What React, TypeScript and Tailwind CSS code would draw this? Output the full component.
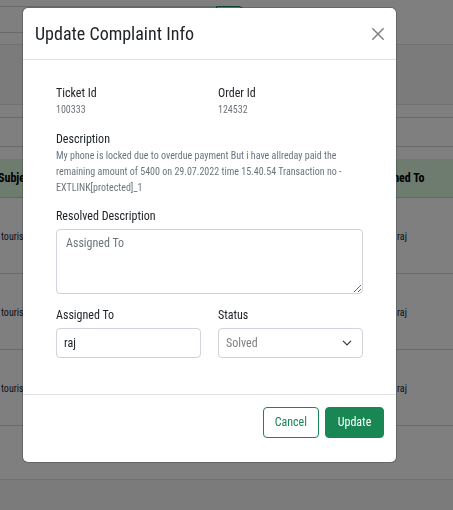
import React from "react";

const rows = [
  { id: 1, subject: "tourist", assignee: "raj" },
  { id: 2, subject: "tourist", assignee: "raj" },
  { id: 3, subject: "tourist", assignee: "raj" },
];

function ComplaintsPage() {
  return (
    <div className="min-h-screen overflow-hidden bg-[#f7f7f7]">
      <div className="h-[45px] border-b border-[#dee2e6] bg-white pt-[6px]">
        <div className="flex h-[27px] w-full">
          <div className="w-[216px] border-y border-[#ced4da]" />
          <div className="w-[27px] rounded-r border border-[#198754]" />
        </div>
      </div>
      <div className="h-[59px]" />
      <section className="border-y border-[#dee2e6] bg-white pt-3 pb-[53px]">
        <div className="h-[30px] border-y border-[#ced4da]" />
        <div className="-ml-0.5 pt-3">
          <table className="w-full table-fixed border-collapse text-left">
            <thead>
              <tr className="h-[38px] border-b border-[#c8cdca] bg-[#dcf7de] text-xs text-black">
                <th className="w-[368px] font-bold">Subject</th>
                <th className="font-bold whitespace-nowrap">Assigned To</th>
              </tr>
            </thead>
            <tbody>
              {rows.map((row) => (
                <tr key={row.id} className="h-[76px] border-b border-[#ced4da] text-[10px] text-[#212529]">
                  <td className="pt-0.5 pl-[3px]">{row.subject}</td>
                  <td className="pt-0.5 pl-[31px]">{row.assignee}</td>
                </tr>
              ))}
            </tbody>
          </table>
        </div>
      </section>
    </div>
  );
}

function Detail({ label, children }: { label: string; children: React.ReactNode }) {
  return (
    <div>
      <dt className="text-xs leading-[18px]">{label}</dt>
      <dd className="text-[10px] leading-4 text-[#6c757d]">{children}</dd>
    </div>
  );
}

export default function App() {
  return (
    <div className="font-['Roboto_Condensed','Roboto',sans-serif] text-[#212529]">
      <ComplaintsPage />
      <div className="fixed inset-0 overflow-hidden bg-black/50 pt-[7px] pr-14 pl-[22px]">
        <div role="dialog" aria-labelledby="title" className="rounded-md border border-black/20 bg-white bg-clip-padding">
          <header className="flex h-[52px] items-center justify-between border-b border-[#dee2e6] px-3">
            <h1 id="title" className="text-lg">Update Complaint Info</h1>
            <button type="button" aria-label="Close" className="text-[#808080]">
              <svg width="12" height="12" viewBox="0 0 12 12" fill="none" stroke="currentColor" strokeWidth="1.5" strokeLinecap="round">
                <path d="M.8.8 11.2 11.2M11.2.8.8 11.2" />
              </svg>
            </button>
          </header>
          <form>
            <div className="px-[33px] pt-6 pb-9">
              <dl className="grid grid-cols-2 gap-x-[17px] gap-y-3">
                <Detail label="Ticket Id">100333</Detail>
                <Detail label="Order Id">124532</Detail>
                <div className="col-span-2">
                  <Detail label="Description">
                    My phone is locked due to overdue payment But i have allreday paid the remaining amount of 5400 on
                    29.07.2022 time 15.40.54 Transaction no - EXTLINK[protected]_1
                  </Detail>
                </div>
              </dl>
              <div className="mt-[11px]">
                <label htmlFor="resolved" className="block text-xs leading-[18px]">Resolved Description</label>
                <textarea
                  id="resolved"
                  placeholder="Assigned To"
                  className="mt-1 block h-[65px] w-full rounded border border-[#ced4da] px-[9px] py-1 text-xs leading-[18px] placeholder:text-[#6c757d]"
                />
              </div>
              <div className="mt-3 grid grid-cols-2 gap-x-[17px]">
                <div>
                  <label htmlFor="assigned" className="block text-xs leading-[18px]">Assigned To</label>
                  <input
                    id="assigned"
                    defaultValue="raj"
                    className="mt-1 block h-[30px] w-full rounded border border-[#ced4da] px-[7px] text-xs"
                  />
                </div>
                <div>
                  <label htmlFor="status" className="block text-xs leading-[18px]">Status</label>
                  <div className="mt-1 grid items-center">
                    <select
                      id="status"
                      defaultValue="Solved"
                      className="col-start-1 row-start-1 h-[30px] w-full appearance-none rounded border border-[#ced4da] bg-white px-[7px] text-xs text-[#808080]"
                    >
                      <option>Solved</option>
                      <option>Pending</option>
                    </select>
                    <svg className="pointer-events-none col-start-1 row-start-1 mr-[11px] justify-self-end" width="10" height="10" viewBox="0 0 16 16" fill="none" stroke="#343a40" strokeWidth="2" strokeLinecap="round" strokeLinejoin="round">
                      <path d="m2 5 6 6 6-6" />
                    </svg>
                  </div>
                </div>
              </div>
            </div>
            <footer className="flex justify-end gap-[6px] border-t border-[#dee2e6] px-3 pt-3 pb-6">
              <button type="button" className="h-[31px] rounded border border-[#198754] px-[11px] pb-px text-xs text-[#198754]">Cancel</button>
              <button type="submit" className="h-[31px] min-w-[59px] rounded border border-[#198754] bg-[#198754] px-[11px] pb-px text-xs text-white">Update</button>
            </footer>
          </form>
        </div>
      </div>
    </div>
  );
}
